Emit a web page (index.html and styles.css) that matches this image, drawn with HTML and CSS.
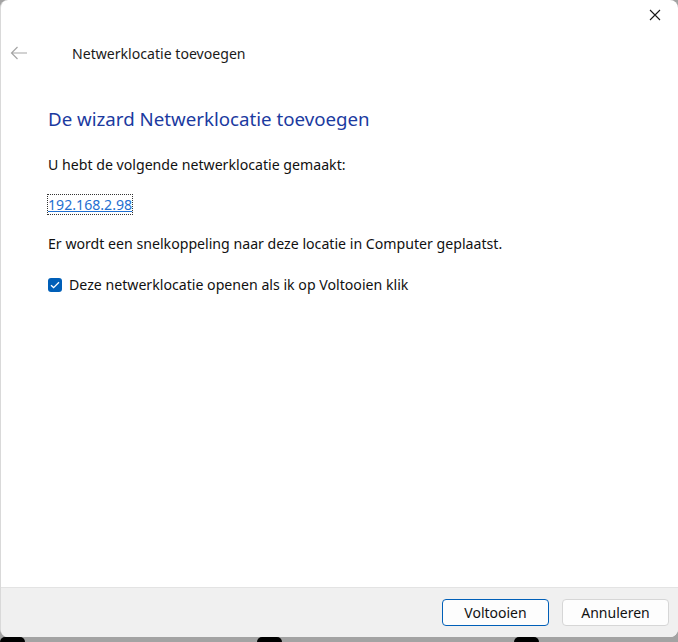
FILE: index.html
```html
<!DOCTYPE html>
<html lang="nl">
<head>
  <meta charset="UTF-8" />
  <title>Netwerklocatie toevoegen</title>
  <link rel="stylesheet" href="styles.css">
</head>
<body>

  <div class="window">
    <div class="titlebar">
      <button class="close" aria-label="Sluiten">
        <svg width="12" height="12" viewBox="0 0 12 12"><path d="M1 1L11 11M11 1L1 11" stroke="#1a1a1a" stroke-width="1.1" fill="none"/></svg>
      </button>
    </div>

    <div class="header">
      <span class="back">
        <svg width="18" height="14" viewBox="0 0 18 14"><path d="M17 7H1.5M7.5 1L1.5 7l6 6" stroke="#a6a6a6" stroke-width="1.2" fill="none"/></svg>
      </span>
      <span class="header-title">Netwerklocatie toevoegen</span>
    </div>

    <!-- wizard inhoud -->
    <div class="content">
      <h1>De wizard Netwerklocatie toevoegen</h1>
      <p class="first">U hebt de volgende netwerklocatie gemaakt:</p>
      <p class="addr"><a href="#" class="link">192.168.2.98</a></p>
      <p>Er wordt een snelkoppeling naar deze locatie in Computer geplaatst.</p>
      <label class="check">
        <span class="box">
          <svg width="10" height="8" viewBox="0 0 10 8"><path d="M1 4.2l2.6 2.4L9 1.2" stroke="#fff" stroke-width="1.3" fill="none"/></svg>
        </span>
        Deze netwerklocatie openen als ik op Voltooien klik
      </label>
    </div>

    <div class="footer">
      <button class="btn primary">Voltooien</button>
      <button class="btn">Annuleren</button>
    </div>
  </div>

  <div class="desk">
    <span class="blob"></span>
    <span class="blob"></span>
    <span class="blob"></span>
  </div>

</body>
</html>
```

FILE: styles.css
```css
* {
  box-sizing: border-box;
  font-family: 'Noto Sans', 'Open Sans', sans-serif;
}
body {
  margin: 0;
  background: #a3a3a3;
  width: 678px;
  height: 642px;
  overflow: hidden;
}
.window {
  height: 637px;
  background: #fff;
  border-radius: 8px;
  border-left: 1px solid #d9d9d9;
  display: flex;
  flex-direction: column;
  overflow: hidden;
}
.titlebar {
  height: 30px;
  display: flex;
  justify-content: flex-end;
}
.close {
  width: 46px;
  height: 30px;
  border: none;
  background: none;
  padding: 0;
  display: flex;
  align-items: center;
  justify-content: center;
}
.header {
  display: flex;
  align-items: center;
  height: 46px;
  padding-left: 9px;
}
.back {
  width: 62px;
  display: flex;
  align-items: center;
}
.header-title {
  font-size: 14.1px;
  color: #1a1a1a;
}
.content {
  padding: 0 0 0 47px;
}
h1 {
  margin: 30px 0 0;
  font-size: 18.7px;
  font-weight: normal;
  color: #1b3a9f;
  line-height: 26px;
}
p {
  margin: 19px 0 0;
  font-size: 14.15px;
  line-height: 20px;
  color: #111;
}
p.first {
  margin-top: 23px;
}
p.addr {
  margin-top: 20px;
}
.link {
  color: #1f6fd1;
  outline: 1px dotted #333;
  outline-offset: 0;
}
.check {
  display: flex;
  align-items: center;
  gap: 7px;
  margin-top: 21px;
  font-size: 14.15px;
  line-height: 20px;
  color: #111;
}
.box {
  width: 14px;
  height: 14px;
  border-radius: 3px;
  background: #005fb8;
  display: flex;
  align-items: center;
  justify-content: center;
}
.footer {
  margin-top: auto;
  height: 50px;
  background: #f0f0f0;
  border-top: 1px solid #e3e3e3;
  display: flex;
  justify-content: flex-end;
  align-items: center;
  gap: 13px;
  padding-right: 9px;
}
.btn {
  width: 107px;
  height: 27px;
  font-size: 14px;
  color: #111;
  background: #fdfdfd;
  border: 1px solid #d6d6d6;
  border-radius: 4px;
  padding: 0;
}
.btn.primary {
  border-color: #005fb8;
}
.desk {
  height: 5px;
  display: flex;
  gap: 232px;
}
.blob {
  width: 25px;
  height: 5px;
  background: #000;
  border-radius: 6px 6px 0 0;
}
```
